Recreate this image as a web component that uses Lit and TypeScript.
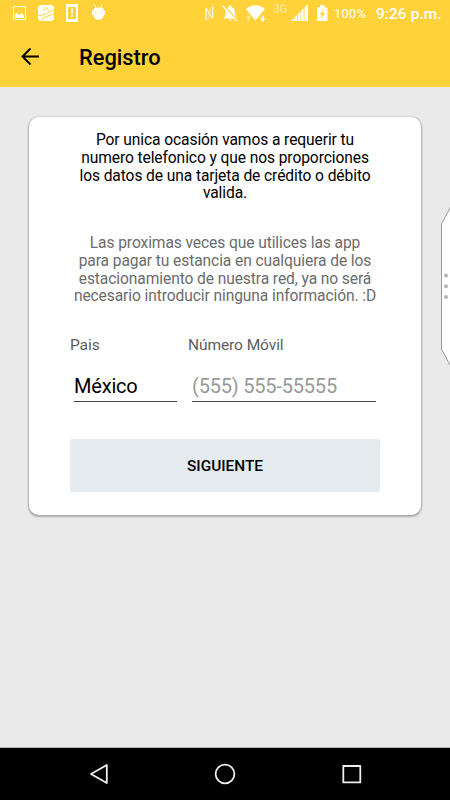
import { LitElement, html, css, svg } from "lit";
import { customElement } from "lit/decorators.js";

const INTRO = [
  "Por unica ocasión vamos a requerir tu",
  "numero telefonico y que nos proporciones",
  "los datos de una tarjeta de crédito o débito",
  "valida.",
];
const NOTE = [
  "Las proximas veces que utilices las app",
  "para pagar tu estancia en cualquiera de los",
  "estacionamiento de nuestra red, ya no será",
  "necesario introducir ninguna información. :D",
];

@customElement("status-bar")
class StatusBar extends LitElement {
  static styles = css`
    :host { display: flex; height: 27px; position: relative; color: #fff; }
    .icons { display: block; width: 334px; height: 27px; flex: none; }
    .net { font: 500 12px Roboto, sans-serif; fill: #ffe591; }
    .pct { font-size: 12.8px; line-height: 28px; letter-spacing: 0.3px; width: 42px; white-space: nowrap; }
    .time { font-size: 15.3px; font-weight: 500; line-height: 28px; letter-spacing: 0.15px; white-space: nowrap; }
  `;
  render() {
    return html`
      <svg class="icons" viewBox="0 0 334 27" fill="#fff">
        <path fill-rule="evenodd" d="M13 6h13v14H13zM14 7v12h11V7z" />
        <path d="M15 18v-4l2-1 2 2 2-1 1-1 2 3v2z" />
        <rect x="38" y="5" width="16" height="16" rx="3.5" />
        <g fill="none" stroke="#ffd23a">
          <path d="M38.500 15.500q6 0 9-2.500t6.500-2.500M41 20.500q3-3.500 7-4.500t6-2.500" stroke-width="1" />
          <path d="M43 8h2m1 0h2M44 10h2m1 0h2" stroke-width="1.2" />
        </g>
        <path fill-rule="evenodd" d="M67 4h10q1 0 1 1v16q0 1-1 1H67q-1 0-1-1V5q0-1 1-1zM68 7v12h8V7z" />
        <path d="M71 8.500h2v5h-2zM71 15h2v2h-2z" />
        <path d="M94.500 4.500l1.500 4M102 4.500l-1.500 4" stroke="#fff" stroke-width="1" />
        <path d="M94.500 8q4-1 8 0 1 .5 1 2.500h1.500v4.500h-1.300q-.5 4.800-5.200 4.800t-5.200-4.800H92v-4.500h1.500q0-2 1-2.500z" />
        <path d="M95.200 12.500h1.200v1.300H95.200zM101 12.500h1.200v1.300H101z" fill="#ffd23a" />
        <path d="M206 8.500v11.500M206 8.200l6.500 10M212.700 18V6.500" fill="none" stroke="#fff" stroke-width="1.100" />
        <path d="M206.500 19.800l2.200-1.500v-5.500M212.300 7l-2.200 1.500v4.500" fill="none" stroke="#ffeeb5" stroke-width="0.800" />
        <path d="M223.500 18.500c2-1.500 2-3 2-6 0-3 1.500-5 3.500-5.500V6q1.200-2 2.400 0v1c2.500.8 3.600 3 3.600 5.500s.5 4.500 2 6z" />
        <path d="M228.500 19.500h3.500q-1.700 2.500-3.500 0z" />
        <path d="M223.500 5l14 15.500" stroke="#ffd23a" stroke-width="1.700" />
        <path d="M222.500 5.500l14 15.500" stroke="#fff" stroke-width="1.300" />
        <path d="M246 9q9.500-7.500 19 0l-9.500 11.500z" />
        <path d="M248.500 14l3 3.500H249.200V21.500H247.800V17.500H246z" fill="#ffe48b" />
        <path d="M260.500 14h4v3h2.200l-3.700 5.200-3.700-5.200h1.200z" fill="#ffd23a" />
        <path d="M262 15.500h1.500v3h2L262.800 22 260 18.500h2z" />
        ${svg`<text class="net" x="273" y="13" textLength="14.500" lengthAdjust="spacingAndGlyphs">3G</text>`}
        <path d="M291 21l3-3V21zM294.600 21v-3.600l2.600-2.600V21zM297.900 21v-6.900l2.600-2.600V21zM301.200 21V10.800l2.600-2.600V21zM304.500 21V7.500l3.500-3.500V21z" />
        <path d="M317 7.500h3V5h4.500v2.500h3V20q0 1-1 1h-8.500q-1 0-1-1z" />
        <path d="M324.500 8.500l-5 6h2.500l-2 4.500 5.500-6h-3z" fill="#ffd23a" />
      </svg>
      <span class="pct">100%</span>
      <span class="time">9:26 p.m.</span>
    `;
  }
}

@customElement("nav-bar")
class NavBar extends LitElement {
  static styles = css`
    :host { display: block; height: 52px; background: #000; box-shadow: 0 -1px 0 #b4b4b4; }
    svg { display: block; }
  `;
  render() {
    return html`
      <svg width="450" height="52" fill="none" stroke="#eee" stroke-width="1.800" stroke-linejoin="round">
        <path d="M91 26l15.800-9v18z" />
        <circle cx="225" cy="26" r="9.400" />
        <rect x="343.300" y="18" width="17" height="16.400" />
      </svg>
    `;
  }
}

@customElement("app-root")
class AppRoot extends LitElement {
  static styles = css`
    :host {
      display: flex; flex-direction: column; position: relative; overflow: hidden;
      width: 450px; height: 800px; background: #eaeaea;
      font-family: Roboto, sans-serif; color: #000;
    }
    header { height: 87px; background: #ffd23a; flex: none; }
    .toolbar { display: flex; align-items: center; height: 60px; padding-left: 20px; }
    .back { width: 20px; height: 20px; margin-right: 39px; }
    h1 { margin: 2px 0 0; font-size: 21.8px; font-weight: 500; line-height: 24px; letter-spacing: 0; }
    main { flex: 1; padding: 30px 29px 0; }
    .card {
      box-sizing: border-box; width: 392px; height: 398px; padding: 15px 41px 0;
      border-radius: 10px; background: #fff;
      box-shadow: 0 1px 2px 1px rgba(0, 0, 0, 0.28);
    }
    .text { display: flex; flex-direction: column; align-items: center; height: 103px; font-size: 15.6px; letter-spacing: -0.1px; }
    .text span { height: 17.800px; line-height: 17.800px; white-space: nowrap; }
    .note { color: #6c6c6c; height: 99.500px; }
    .fields { display: grid; grid-template-columns: 118px 192px; height: 104.500px; }
    .label { display: block; font-size: 15.5px; line-height: 20px; color: #5c5c5c; letter-spacing: -0.08px; }
    .input {
      margin: 17px 0 0 4px; height: 29px; line-height: 28px; font-size: 20px; letter-spacing: -0.2px;
      border-bottom: 1px solid #444; width: 103px; white-space: nowrap;
    }
    .phone { width: 184px; color: #999; }
    button {
      display: block; width: 310px; height: 53px; border: 0; border-radius: 2px; padding: 0;
      background: #e4eaee; color: #000; font: 500 15.4px Roboto, sans-serif;
    }
    .handle { position: absolute; right: 0; top: 206px; width: 10px; height: 162px; }
  `;
  render() {
    return html`
      <header>
        <status-bar></status-bar>
        <div class="toolbar">
          <svg class="back" viewBox="0 0 20 20" fill="none" stroke="#000" stroke-width="1.900">
            <path d="M10.500 1.500L2.500 9.500l8 8M2.500 9.500H19" />
          </svg>
          <h1>Registro</h1>
        </div>
      </header>
      <main>
        <section class="card">
          <div class="text">${INTRO.map((l) => html`<span>${l}</span>`)}</div>
          <div class="text note">${NOTE.map((l) => html`<span>${l}</span>`)}</div>
          <div class="fields">
            <div><span class="label">Pais</span><div class="input">México</div></div>
            <div><span class="label">Número Móvil</span><div class="input phone">(555) 555-55555</div></div>
          </div>
          <button>SIGUIENTE</button>
        </section>
      </main>
      <nav-bar></nav-bar>
      <svg class="handle" viewBox="0 0 10 162">
        <path d="M11 0L1.500 18v125L11 161" fill="#fff" stroke="#999" stroke-width="1" />
        <g fill="#b4b4b4"><circle cx="6" cy="69.500" r="2" /><circle cx="6" cy="80.200" r="2" /><circle cx="6" cy="91" r="2" /></g>
      </svg>
    `;
  }
}
